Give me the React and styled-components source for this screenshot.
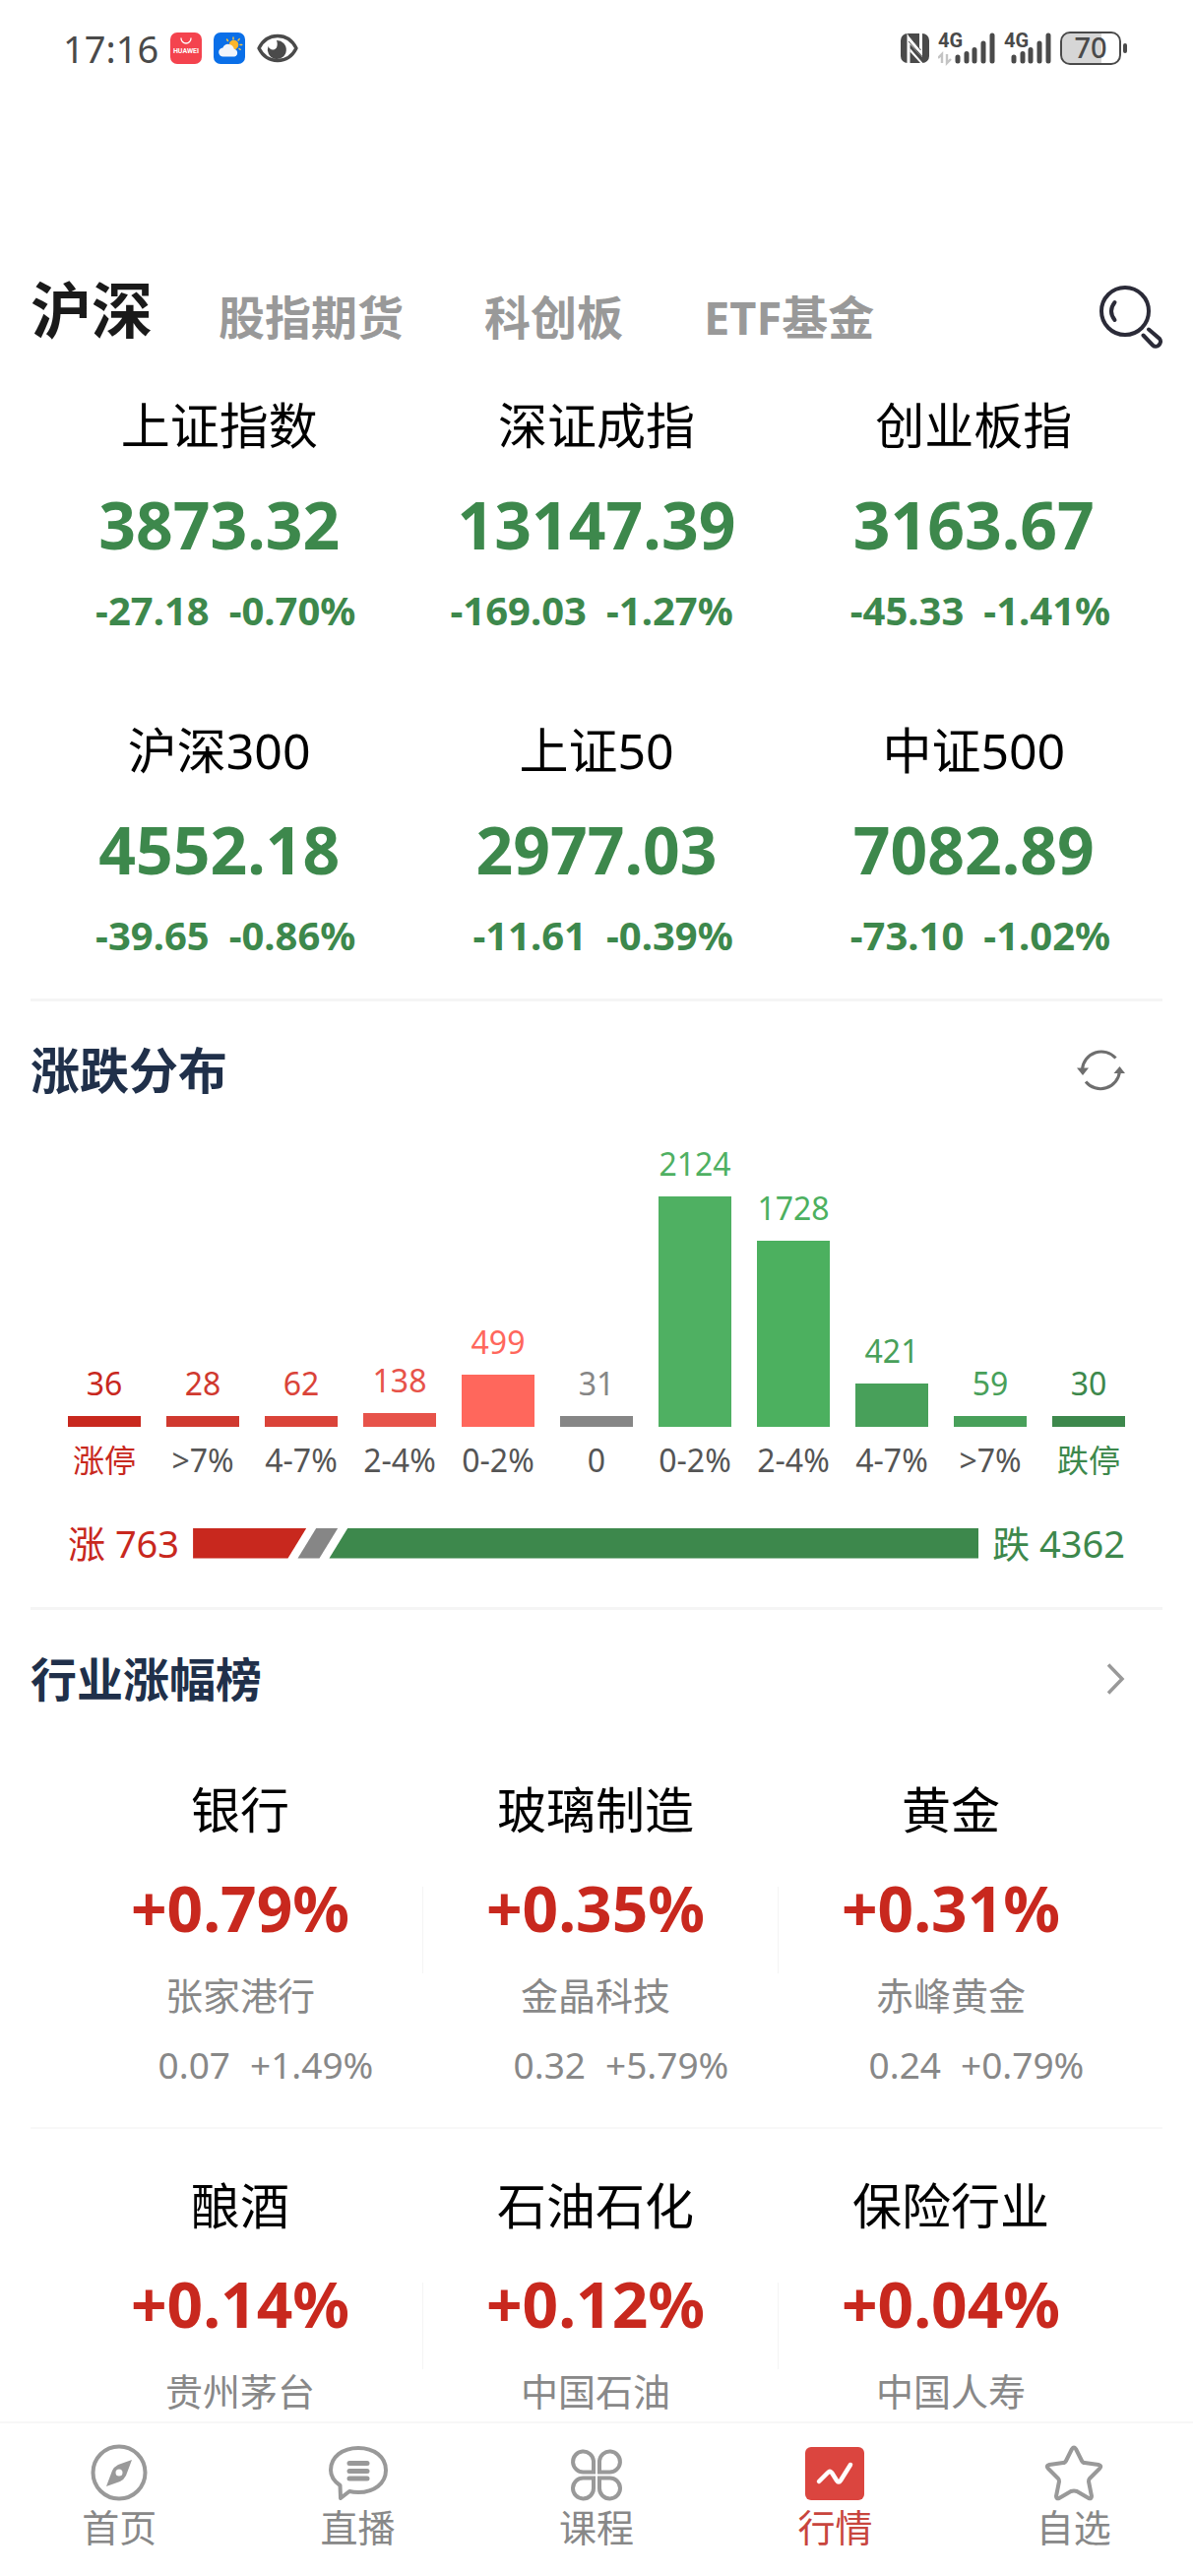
import styled, { createGlobalStyle } from "styled-components";

const GlobalStyle = createGlobalStyle`
  * {
    box-sizing: border-box;
  }

  body {
    margin: 0;
    background: #fff;
    font-family: "Noto Sans", "Noto Sans CJK SC", sans-serif;
  }

  h2, p {
    margin: 0;
  }

  button {
    padding: 0;
    border: 0;
    background: none;
    font-family: inherit;
    cursor: pointer;
  }

  svg {
    display: block;
    flex: none;
  }
`;

const Page = styled.div`
  display: flex;
  flex-direction: column;
  height: 100vh;
`;

const Content = styled.main`
  flex: 1;
  min-height: 0;
  overflow-y: auto;
  scrollbar-width: none;
`;

/* status bar */

const StatusBar = styled.div`
  display: flex;
  justify-content: space-between;
  align-items: center;
  height: 98px;
  padding: 0 66px 0 64px;
  color: #4a4a4a;
`;

const StatusGroup = styled.div`
  display: flex;
  align-items: center;
  gap: ${(props) => props.$gap}px;
`;

const Clock = styled.span`
  font-size: 38px;
  line-height: 40px;
`;

/* top tabs */

const Header = styled.header`
  display: flex;
  justify-content: space-between;
  align-items: center;
  height: 64px;
  margin: 192px 31px 0;
`;

const Tabs = styled.nav`
  display: flex;
  align-items: center;
`;

const Tab = styled.button`
  padding: ${(props) => (props.$active ? "0 26px 14px 0" : "0 41px")};
  color: ${(props) => (props.$active ? "#1a1a1a" : "#999")};
  font-size: ${(props) => (props.$active ? "62px" : "47px")};
  font-weight: 700;
  line-height: 64px;
`;

/* index quotes and industries share these */

const QuoteGrid = styled.div`
  display: grid;
  grid-template-columns: repeat(3, 1fr);
  padding: 0 31px;
`;

const Quote = styled.div`
  height: 330px;
  padding-top: 48px;
  text-align: center;
`;

const Name = styled.p`
  color: #000;
  font-size: 50px;
  line-height: 60px;
`;

const Value = styled.p`
  margin: 30px 0 23px;
  color: ${(props) => props.$color};
  font-size: ${(props) => props.$size}px;
  font-weight: 700;
  line-height: 80px;
`;

const Change = styled.div`
  display: grid;
  grid-template-columns: 1fr 1fr;
  gap: 20px;
  color: ${(props) => props.$color};
  font-size: ${(props) => (props.$bold ? "40px" : "37px")};
  font-weight: ${(props) => (props.$bold ? 700 : 400)};
  line-height: 50px;
  text-align: left;

  span:first-child {
    text-align: right;
  }
`;

/* sections */

const Section = styled.section`
  border-top: 3px solid #f5f5f5;
  margin: 0 31px;
`;

const SectionHead = styled.div`
  display: flex;
  justify-content: space-between;
  align-items: center;
  padding: 40px 38px 0 0;
`;

const Title = styled.h2`
  color: #20304a;
  font-size: ${(props) => props.$size}px;
  font-weight: 700;
  line-height: 60px;
`;

const Chart = styled.div`
  display: grid;
  grid-template-columns: repeat(11, 1fr);
  align-items: end;
  gap: 26px;
  padding: 45px 38px 39px;
`;

const Column = styled.div`
  color: ${(props) => props.$color};
  font-size: 32px;
  line-height: 40px;
  text-align: center;
  white-space: nowrap;
`;

const Bar = styled.div`
  height: ${(props) => props.$height}px;
  margin: 13px 0 14px;
  background: ${(props) => props.$color};
`;

const Range = styled.div`
  color: ${(props) => props.$color || "#555"};
`;

const Ratio = styled.div`
  display: flex;
  align-items: center;
  gap: 14px;
  padding: 0 38px 40px;
  font-size: 38px;
  line-height: 50px;
`;

const RatioText = styled.span`
  color: ${(props) => props.$color};
`;

const RatioBar = styled.div`
  display: flex;
  flex: 1;
  height: 31px;
`;

const Part = styled.div`
  flex: ${(props) => props.$share} 1 0;
  min-width: 41px;
  background: ${(props) => props.$color};
  clip-path: polygon(${(props) => props.$shape});

  & + & {
    margin-left: -9px;
  }
`;

const IndustryRow = styled.div`
  display: grid;
  grid-template-columns: repeat(3, 1fr);
  height: 402px;
  padding: 0 29px 0 38px;
  border-bottom: 2px solid #f8f8f8;
`;

const Industry = styled.div`
  padding: 48px 11px 0 0;
  text-align: center;
  background: linear-gradient(#f4f4f4, #f4f4f4) no-repeat right 156px / 1px 88px;

  &:last-child {
    background: none;
  }
`;

const Stock = styled.p`
  margin-bottom: 21px;
  color: #888;
  font-size: 38px;
  line-height: 50px;
`;

const Industries = styled.div`
  padding-top: 25px;
`;

/* bottom navigation */

const BottomNav = styled.nav`
  display: grid;
  grid-template-columns: repeat(5, 1fr);
  height: 157px;
  border-top: 2px solid #f7f7f7;
  background: #fff;
`;

const NavLink = styled.a`
  display: flex;
  flex-direction: column;
  align-items: center;
  padding-top: 20px;
  color: ${(props) => (props.$active ? "#c8453d" : "#888")};
  font-size: 38px;
  line-height: 50px;
  text-decoration: none;
`;

const GREEN = "#3d884c";
const RED = "#c8281e";

const indexes = [
  { name: "上证指数", value: "3873.32", diff: "-27.18", rate: "-0.70%" },
  { name: "深证成指", value: "13147.39", diff: "-169.03", rate: "-1.27%" },
  { name: "创业板指", value: "3163.67", diff: "-45.33", rate: "-1.41%" },
  { name: "沪深300", value: "4552.18", diff: "-39.65", rate: "-0.86%" },
  { name: "上证50", value: "2977.03", diff: "-11.61", rate: "-0.39%" },
  { name: "中证500", value: "7082.89", diff: "-73.10", rate: "-1.02%" },
];

const columns = [
  { count: 36, range: "涨停", height: 11, color: "#c8281e", limit: true },
  { count: 28, range: ">7%", height: 11, color: "#d0392f" },
  { count: 62, range: "4-7%", height: 11, color: "#da4339" },
  { count: 138, range: "2-4%", height: 14, color: "#e7534a" },
  { count: 499, range: "0-2%", height: 53, color: "#ff675c" },
  { count: 31, range: "0", height: 11, color: "#868686" },
  { count: 2124, range: "0-2%", height: 234, color: "#4fb062" },
  { count: 1728, range: "2-4%", height: 189, color: "#4cb05f" },
  { count: 421, range: "4-7%", height: 44, color: "#48a05a" },
  { count: 59, range: ">7%", height: 11, color: "#48a05a" },
  { count: 30, range: "跌停", height: 11, color: "#3d884c", limit: true },
];

const industries = [
  [
    { name: "银行", value: "+0.79%", stock: "张家港行", diff: "0.07", rate: "+1.49%" },
    { name: "玻璃制造", value: "+0.35%", stock: "金晶科技", diff: "0.32", rate: "+5.79%" },
    { name: "黄金", value: "+0.31%", stock: "赤峰黄金", diff: "0.24", rate: "+0.79%" },
  ],
  [
    { name: "酿酒", value: "+0.14%", stock: "贵州茅台" },
    { name: "石油石化", value: "+0.12%", stock: "中国石油" },
    { name: "保险行业", value: "+0.04%", stock: "中国人寿" },
  ],
];

function StoreIcon() {
  return (
    <svg width="32" height="32" viewBox="0 0 32 32">
      <rect width="32" height="32" rx="7" fill="#f4434e" />
      <path d="M11 6a5 5 0 0 0 10 0" fill="none" stroke="#fff" strokeWidth="1.3" strokeLinecap="round" />
      <text x="16" y="21" fill="#fff" fontSize="7" fontWeight="700" textAnchor="middle" fontFamily="Roboto, sans-serif">
        HUAWEI
      </text>
    </svg>
  );
}

function WeatherIcon() {
  return (
    <svg width="32" height="32" viewBox="0 0 32 32">
      <rect width="32" height="32" rx="7" fill="#0a6fe8" />
      <g stroke="#f9c440" strokeWidth="1.4" strokeLinecap="round">
        <path d="M20 7V5M14.5 8.500l-1-1.500M25 8l1.200-1.400M27 12.500h1.800M26 16.500l1.200.8" />
      </g>
      <circle cx="20.500" cy="12.500" r="4.800" fill="#fbb62c" />
      <path d="M10 24.500a4.500 4.500 0 0 1-.6-9 6 6 0 0 1 11.400 1.200 4 4 0 0 1 .4 7.800z" fill="#f1f5fb" />
    </svg>
  );
}

function EyeIcon() {
  return (
    <svg width="42" height="30" viewBox="0 0 42 30">
      <path
        d="M2 15C6 7 13 2.500 21 2.500S36 7 40 15c-4 8-11 12.500-19 12.500S6 23 2 15z"
        fill="none"
        stroke="#4a4a4a"
        strokeWidth="3.400"
        strokeLinejoin="round"
      />
      <path d="M20 7a9.500 9.500 0 1 1-8.500 6c1 2.500 3 3.800 5.200 3.500 3.500-.4 5-4.500 3.300-9.500z" fill="#4a4a4a" />
    </svg>
  );
}

function NfcIcon() {
  return (
    <svg width="29" height="30" viewBox="0 0 29 30">
      <rect width="29" height="30" rx="7" fill="#4a4a4a" />
      <path d="M6.500 0L19 15V0h3v24L9.500 11v19h-3z" fill="#fff" />
      <path d="M8 1.800L20.500 17M8 8l14 15.500" fill="none" stroke="#4a4a4a" strokeWidth="1" />
      <path d="M9.500 18.500L20 30h2.500l-13-15z" fill="#fff" />
    </svg>
  );
}

function SignalIcon({ arrows }) {
  const start = arrows ? 20 : 10;
  return (
    <svg width={arrows ? 58 : 48} height="42" viewBox={arrows ? "0 -4 58 42" : "0 -4 48 42"}>
      <text x="0" y="16" fill="#4a4a4a" fontSize="20" fontWeight="700" fontFamily="Roboto, sans-serif">
        4G
      </text>
      {arrows && (
        <path d="M0 27l4-4v9M13 28l-4 4v-9" fill="none" stroke="#c4c4c4" strokeWidth="2.400" />
      )}
      <g stroke="#4a4a4a" strokeWidth="5" strokeLinecap="round">
        <path d={`M${start} 26v4M${start + 9} 22.500V30M${start + 17} 18.500V30M${start + 26} 12V30M${start + 35} 4V30`} />
      </g>
    </svg>
  );
}

function BatteryIcon() {
  return (
    <svg width="69" height="46" viewBox="0 -6 69 46">
      <path d="M10 2h32v30H10a8 8 0 0 1-8-8V10a8 8 0 0 1 8-8z" fill="#d6d6d6" />
      <rect x="1" y="1" width="60" height="32" rx="9" fill="none" stroke="#4a4a4a" strokeWidth="2" />
      <rect x="64" y="12" width="4" height="10" rx="2" fill="#4a4a4a" />
      <text x="31" y="27" fill="#4a4a4a" fontSize="29" fontWeight="500" textAnchor="middle" fontFamily="Noto Sans, sans-serif">
        70
      </text>
    </svg>
  );
}

function SearchIcon() {
  return (
    <svg width="64" height="64" viewBox="0 0 64 64" fill="none" stroke="#2b2b38" strokeWidth="4" strokeLinecap="round">
      <circle cx="26" cy="26" r="24" />
      <path d="M15.500 17q-7 9 0 18" />
      <path d="M44.500 50.500l9.500 10c4 4 10.500-2 7-6.500L50 44.500" />
    </svg>
  );
}

function RefreshIcon() {
  return (
    <svg width="49" height="42" viewBox="0 0 49 42" fill="none" stroke="#6e6e6e" strokeWidth="3">
      <path d="M39.500 8.500A19.500 19.500 0 0 0 5.500 20" />
      <path d="M9 32.500A19.500 19.500 0 0 0 43.500 22" />
      <path d="M0 18.500h12L6 26z" fill="#6e6e6e" stroke="none" />
      <path d="M37.500 24h11.500L43.500 17z" fill="#6e6e6e" stroke="none" />
    </svg>
  );
}

function ChevronIcon() {
  return (
    <svg width="18" height="32" viewBox="0 0 18 32" fill="none" stroke="#999" strokeWidth="3.500">
      <path d="M1 1.500l14 14.500L1 30.500" />
    </svg>
  );
}

function HomeIcon() {
  return (
    <svg width="60" height="60" viewBox="0 0 60 60">
      <circle cx="30" cy="30" r="26.500" fill="none" stroke="#999" strokeWidth="4" />
      <path
        d="M43 17L37 33q-2 4-6 6L17 44l6-16q2-4 6-6zM30 26.500a3.500 3.500 0 1 0 0 7 3.500 3.500 0 0 0 0-7z"
        fill="#999"
        fillRule="evenodd"
      />
    </svg>
  );
}

function LiveIcon() {
  return (
    <svg width="60" height="60" viewBox="0 0 60 60" fill="none" stroke="#999" strokeWidth="4" strokeLinejoin="round" strokeLinecap="round">
      <path d="M11.500 43C5 38.500 2 33 2 27.500 2 14 14 5 30 5s28 9 28 22.500S46 50 30 50q-5 0-9-1l-9 7z" />
      <path d="M21 20.500h18M21 28.500h18M21 36h18" strokeWidth="5" />
    </svg>
  );
}

function CourseIcon() {
  return (
    <svg width="60" height="60" viewBox="0 0 60 60" fill="none" stroke="#999" strokeWidth="4">
      <path d="M27 29.500H17A10.500 10.500 0 1 1 27 18z" />
      <path d="M33 29.500h10A10.500 10.500 0 1 0 33 18z" />
      <path d="M27 35.500H17A10.500 10.500 0 1 0 27 46z" />
      <path d="M33 35.500h10A10.500 10.500 0 1 1 33 46z" />
    </svg>
  );
}

function MarketIcon() {
  return (
    <svg width="60" height="60" viewBox="0 0 60 60">
      <rect y="4" width="60" height="54" rx="6" fill="#db453f" />
      <path
        d="M14 39l9-9q2-2 4 0l5 8q2 3 4 0L46 22"
        fill="none"
        stroke="#fff"
        strokeWidth="4.500"
        strokeLinecap="round"
        strokeLinejoin="round"
      />
    </svg>
  );
}

function StarIcon() {
  return (
    <svg width="60" height="60" viewBox="0 0 60 60" fill="none" stroke="#999" strokeWidth="4" strokeLinejoin="round">
      <path d="M28 6q2-3 4 0l6 12q1 2 3 2l14 2q4 1 1 4L46 36q-1 1-1 3l3 15q0 3-3 2l-12-7q-3-1-6 0l-12 7q-3 1-3-2l3-15q0-2-1-3L4 26q-3-3 1-4l14-2q2 0 3-2z" />
    </svg>
  );
}

const navItems = [
  { label: "首页", Icon: HomeIcon },
  { label: "直播", Icon: LiveIcon },
  { label: "课程", Icon: CourseIcon },
  { label: "行情", Icon: MarketIcon, active: true },
  { label: "自选", Icon: StarIcon },
];

function App() {
  return (
    <Page>
      <GlobalStyle />
      <StatusBar>
        <StatusGroup $gap={12}>
          <Clock>17:16</Clock>
          <StoreIcon />
          <WeatherIcon />
          <EyeIcon />
        </StatusGroup>
        <StatusGroup $gap={9}>
          <NfcIcon />
          <SignalIcon arrows />
          <SignalIcon />
          <BatteryIcon />
        </StatusGroup>
      </StatusBar>

      <Content>
        <Header>
          <Tabs>
            <Tab $active>沪深</Tab>
            <Tab>股指期货</Tab>
            <Tab>科创板</Tab>
            <Tab>ETF基金</Tab>
          </Tabs>
          <button aria-label="搜索">
            <SearchIcon />
          </button>
        </Header>

        <QuoteGrid>
          {indexes.map((item) => (
            <Quote key={item.name}>
              <Name>{item.name}</Name>
              <Value $color={GREEN} $size={66}>{item.value}</Value>
              <Change $color={GREEN} $bold>
                <span>{item.diff}</span>
                <span>{item.rate}</span>
              </Change>
            </Quote>
          ))}
        </QuoteGrid>

        <Section>
          <SectionHead>
            <Title $size={50}>涨跌分布</Title>
            <button aria-label="刷新">
              <RefreshIcon />
            </button>
          </SectionHead>
          <Chart>
            {columns.map((col) => (
              <Column key={col.count} $color={col.color}>
                {col.count}
                <Bar $height={col.height} $color={col.color} />
                <Range $color={col.limit && col.color}>{col.range}</Range>
              </Column>
            ))}
          </Chart>
          <Ratio>
            <RatioText $color={RED}>涨 763</RatioText>
            <RatioBar>
              <Part $share={763} $color={RED} $shape="0 0, 100% 0, calc(100% - 19px) 100%, 0 100%" />
              <Part $share={31} $color="#868686" $shape="19px 0, 100% 0, calc(100% - 19px) 100%, 0 100%" />
              <Part $share={4362} $color={GREEN} $shape="19px 0, 100% 0, 100% 100%, 0 100%" />
            </RatioBar>
            <RatioText $color={GREEN}>跌 4362</RatioText>
          </Ratio>
        </Section>

        <Section>
          <SectionHead>
            <Title $size={47}>行业涨幅榜</Title>
            <button aria-label="更多">
              <ChevronIcon />
            </button>
          </SectionHead>
          <Industries>
            {industries.map((row) => (
              <IndustryRow key={row[0].name}>
                {row.map((item) => (
                  <Industry key={item.name}>
                    <Name>{item.name}</Name>
                    <Value $color={RED} $size={64}>{item.value}</Value>
                    <Stock>{item.stock}</Stock>
                    {item.diff && (
                      <Change $color="#888">
                        <span>{item.diff}</span>
                        <span>{item.rate}</span>
                      </Change>
                    )}
                  </Industry>
                ))}
              </IndustryRow>
            ))}
          </Industries>
        </Section>
      </Content>

      <BottomNav>
        {navItems.map(({ label, Icon, active }) => (
          <NavLink key={label} href="#" $active={active}>
            <Icon />
            {label}
          </NavLink>
        ))}
      </BottomNav>
    </Page>
  );
}

export default App;
